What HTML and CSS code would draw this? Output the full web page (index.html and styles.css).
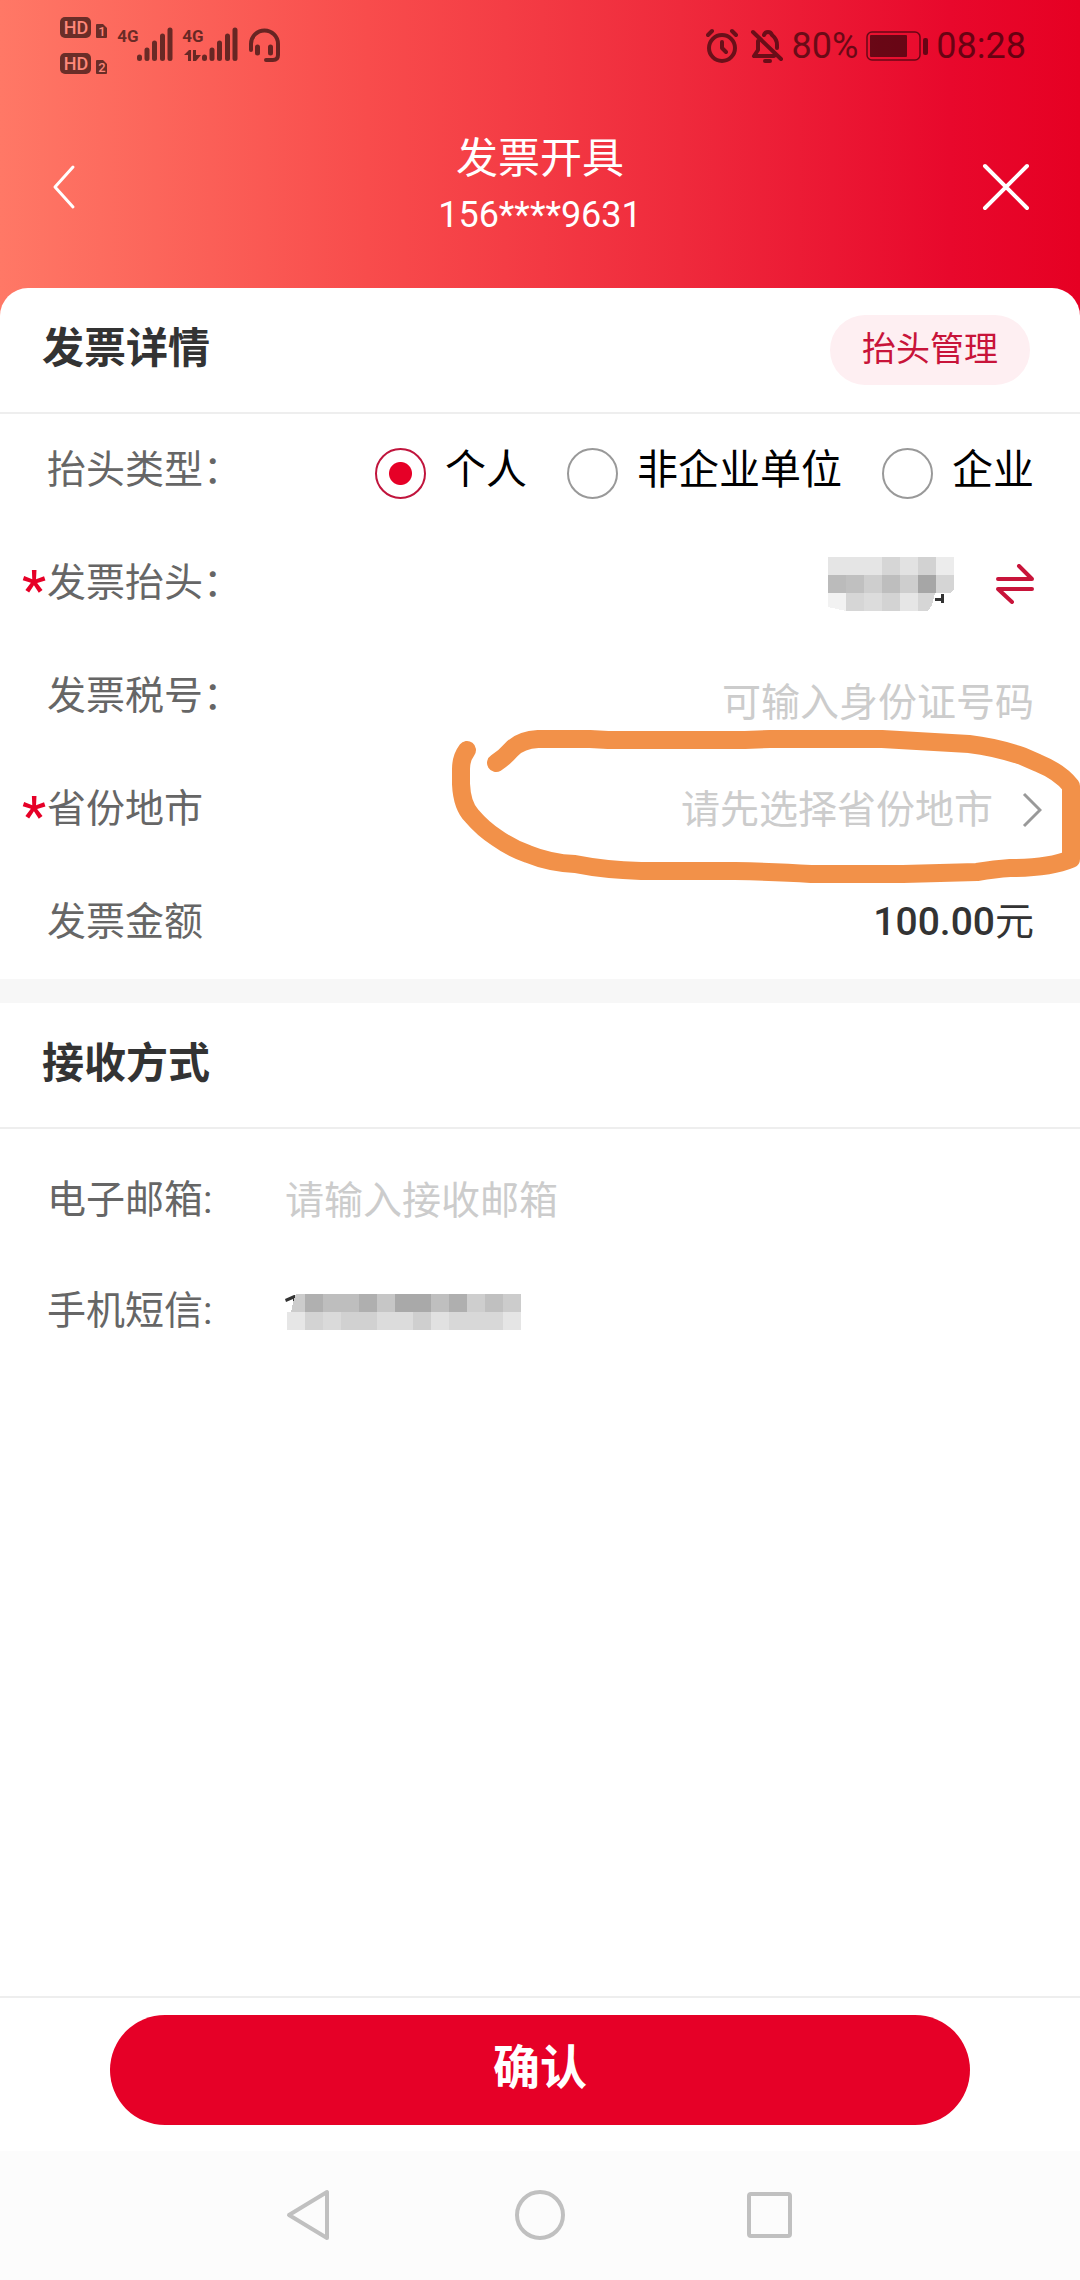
FILE: index.html
```html
<!DOCTYPE html>
<html lang="zh-CN">
<head>
<meta charset="utf-8">
<meta name="viewport" content="width=device-width, initial-scale=1">
<title>发票开具</title>
<link rel="stylesheet" href="styles.css">
</head>
<body>
<div class="page">
  <header class="top">
    <div class="status">
      <div class="status-left">
        <svg class="status-icons" width="220" height="60" viewBox="60 16 220 60" role="img" aria-label="信号">
          <g class="ink">
            <rect x="60" y="17" width="31" height="21" rx="5"/>
            <rect x="60" y="53" width="31" height="21" rx="5"/>
            <path d="M97 24h6l4 4v9q0 1-1 1h-9q-1 0-1-1v-12q0-1 1-1z"/>
            <path d="M97 60h6l4 4v9q0 1-1 1h-9q-1 0-1-1v-12q0-1 1-1z"/>
          </g>
          <g class="badge-text">
            <text x="76" y="34" font-size="18">HD</text>
            <text x="76" y="70" font-size="18">HD</text>
            <text x="102" y="36" font-size="13">1</text>
            <text x="102" y="72" font-size="13">2</text>
          </g>
          <g class="net-text">
            <text x="128" y="42">4G</text>
            <text x="193" y="42">4G</text>
          </g>
          <g class="bars">
            <path d="M139.500 57v1.500M147 50v8.500M154.500 43v15.500M162.500 36v22.500M170 30v28.500"/>
            <path d="M204.500 57v1.500M212 50v8.500M219.500 43v15.500M227.500 36v22.500M235 30v28.500"/>
          </g>
          <path class="ink" d="M184 55l5-5h2v11h-3v-6zM193 50h3v5h5l-5 6h-3z"/>
          <g class="headset">
            <path d="M251 50v-6a13.500 13.500 0 0 1 27 0v11q0 5-5 5h-7"/>
            <path class="thick" d="M257.500 47v6M270.500 47v6"/>
          </g>
        </svg>
      </div>
      <div class="status-right">
        <svg width="36" height="36" viewBox="0 0 36 36" role="img" aria-label="闹钟" class="line">
          <circle cx="18" cy="20" r="13"/>
          <path d="M18 14v6l4 4M4 7l4-4M32 7l-4-4"/>
        </svg>
        <svg width="36" height="36" viewBox="0 0 36 36" role="img" aria-label="静音" class="line">
          <path d="M10 13v9l-4 6h20M16 7q1-3 4-3t4 3q5 4 5 10v3M5 4l28 27"/>
          <path d="M17 33h5"/>
        </svg>
        <span>80%</span>
        <svg class="battery" width="62" height="30" viewBox="0 0 62 30" role="img" aria-label="电量">
          <rect x="1" y="1" width="53" height="28" rx="5" fill="none" stroke="#000" stroke-width="1.500"/>
          <rect x="4" y="4" width="37" height="22" rx="1"/>
          <rect x="57" y="7" width="5" height="17" rx="2"/>
        </svg>
        <time>08:28</time>
      </div>
    </div>
    <nav class="titlebar">
      <button class="icon-btn" type="button" aria-label="返回">
        <svg width="48" height="48" viewBox="0 0 48 48"><path d="M23 4L5 24l18 20" stroke-width="3"/></svg>
      </button>
      <div class="titles">
        <h1>发票开具</h1>
        <p>156****9631</p>
      </div>
      <button class="icon-btn close" type="button" aria-label="关闭">
        <svg width="48" height="48" viewBox="0 0 48 48"><path d="M3 3l42 42M45 3L3 45" stroke-width="4"/></svg>
      </button>
    </nav>
  </header>

  <main class="sheet">
    <form id="invoice" class="form">
      <section>
        <div class="section-head">
          <h2>发票详情</h2>
          <button class="pill" type="button">抬头管理</button>
        </div>
        <div class="row" role="radiogroup" aria-labelledby="type-label">
          <span class="label" id="type-label">抬头类型：</span>
          <div class="options">
            <label class="option"><input type="radio" name="type" checked><span>个人</span></label>
            <label class="option"><input type="radio" name="type"><span>非企业单位</span></label>
            <label class="option"><input type="radio" name="type"><span>企业</span></label>
          </div>
        </div>
        <div class="row">
          <span class="label required">发票抬头：</span>
          <div class="masked-name">
            <svg width="126" height="54" viewBox="0 0 126 54" role="img" aria-label="已隐藏" shape-rendering="crispEdges">
              <path fill="#e5e5e5" d="M0 0h54v18H0z"/><path fill="#d6d6d6" d="M54 0h18v18H54z"/><path fill="#e2e2e2" d="M72 0h18v18H72z"/><path fill="#d2d2d2" d="M90 0h18v18H90z"/><path fill="#ececec" d="M108 0h18v18h-18z"/>
              <path fill="#bbb" d="M0 18h18v18H0z"/><path fill="#c0c0c0" d="M18 18h18v18H18z"/><path fill="#cecece" d="M36 18h18v18H36z"/><path fill="#bebebe" d="M54 18h18v18H54z"/><path fill="#cecece" d="M72 18h18v18H72z"/><path fill="#a6a6a6" d="M90 18h18v18H90z"/><path fill="#d5d5d5" d="M108 18h18v15l-4 3h-14z"/>
              <path fill="#f2f2f2" d="M0 36h18v18L0 50z"/><path fill="#d6d6d6" d="M18 36h18v18H18z"/><path fill="#dcdcdc" d="M36 36h18v18H36z"/><path fill="#d3d3d3" d="M54 36h18v18H54z"/><path fill="#e6e6e6" d="M72 36h18v18H72z"/><path fill="#d6d6d6" d="M90 36h17l-3 12-4 6H90z"/>
              <path fill="#333" d="M107 41h6v-4h3v9h-3v-2h-6z"/>
            </svg>
            <button class="swap" type="button" aria-label="切换抬头">
              <svg width="38" height="40" viewBox="0 0 38 40"><path d="M2 15h34L23 2M36 25H2l14 13"/></svg>
            </button>
          </div>
        </div>
        <div class="row">
          <label class="label" for="tax">发票税号：</label>
          <input class="field field-right" id="tax" type="text" placeholder="可输入身份证号码">
        </div>
        <div class="row region-row">
          <span class="label required" id="region-label">省份地市</span>
          <button class="picker" type="button" aria-haspopup="listbox" aria-describedby="region-label">
            <span>请先选择省份地市</span>
            <svg width="20" height="36" viewBox="0 0 20 36"><path d="M2 2l16 16L2 34"/></svg>
          </button>
          <svg class="marker" width="630" height="160" viewBox="450 728 630 160" aria-hidden="true">
            <path d="M467 750Q461 758 461 769V784Q462 806 472 816Q483 829 497 838Q511 848 528 854Q550 863 575 864Q605 870 641 871H735Q780 872 811 874H903Q935 873 977 872Q995 869 1010 868Q1050 868 1071 859V786Q1060 772 1038 763L1022 756Q995 747 969 744L882 739H770L745 740H608L590 739H538Q520 740 511 750Q504 758 496 763"/>
          </svg>
        </div>
        <div class="row">
          <span class="label">发票金额</span>
          <span class="amount"><b>100.00</b>元</span>
        </div>
      </section>

      <section class="delivery">
        <div class="section-head">
          <h2>接收方式</h2>
        </div>
        <div class="contact">
          <div class="row">
            <label class="label" for="email">电子邮箱:</label>
            <input class="field" id="email" type="email" placeholder="请输入接收邮箱">
          </div>
          <div class="row">
            <span class="label">手机短信:</span>
            <svg class="masked-phone" width="236" height="36" viewBox="0 0 236 36" role="img" aria-label="已隐藏" shape-rendering="crispEdges">
              <path fill="#333" shape-rendering="auto" d="M0 5l9-4h2v7H8V5L1 8z"/>
              <path fill="#ccc" d="M8 9l3-9h9v18H6z"/><path fill="#b0b0b0" d="M20 0h18v18H20z"/><path fill="#bebebe" d="M38 0h36v18H38z"/><path fill="#afafaf" d="M74 0h18v18H74z"/><path fill="#c6c6c6" d="M92 0h18v18H92z"/><path fill="#a9a9a9" d="M110 0h36v18h-36z"/><path fill="#bfbfbf" d="M146 0h18v18h-18z"/><path fill="#afafaf" d="M164 0h18v18h-18z"/><path fill="#cecece" d="M182 0h18v18h-18z"/><path fill="#c0c0c0" d="M200 0h18v18h-18z"/><path fill="#ccc" d="M218 0h18v18h-18z"/>
              <path fill="#e6e6e6" d="M2 18h18v18H2z"/><path fill="#d3d3d3" d="M20 18h18v18H20z"/><path fill="#dadada" d="M38 18h18v18H38z"/><path fill="#d1d1d1" d="M56 18h36v18H56z"/><path fill="#dcdcdc" d="M92 18h36v18H92z"/><path fill="#cfcfcf" d="M128 18h18v18h-18z"/><path fill="#e1e1e1" d="M146 18h18v18h-18z"/><path fill="#d8d8d8" d="M164 18h54v18h-54z"/><path fill="#e5e5e5" d="M218 18h18v18h-18z"/>
            </svg>
          </div>
        </div>
      </section>
    </form>
  </main>

  <footer class="confirm-bar">
    <button class="confirm" type="submit" form="invoice">确认</button>
  </footer>

  <nav class="sysnav">
    <button type="button" aria-label="返回"><svg width="50" height="54" viewBox="0 0 50 54"><path d="M4 27L42 4V50z"/></svg></button>
    <button type="button" aria-label="主页"><svg width="50" height="54" viewBox="0 0 50 54"><circle cx="25" cy="27" r="23"/></svg></button>
    <button type="button" aria-label="最近任务"><svg width="50" height="54" viewBox="0 0 50 54"><rect x="4" y="6" width="41" height="42" rx="2"/></svg></button>
  </nav>
</div>
</body>
</html>
```
FILE: styles.css
```css
* {
  box-sizing: border-box;
}

body {
  margin: 0;
  background: #fff;
  color: #333;
  font-family: Roboto, "Noto Sans CJK SC", sans-serif;
  font-size: 39px;
  line-height: 48px;
}

h1,
h2,
p {
  margin: 0;
}

button {
  border: 0;
  padding: 0;
  background: none;
  color: inherit;
  font: inherit;
  cursor: pointer;
}

svg {
  display: block;
  flex: none;
}

.page {
  display: flex;
  flex-direction: column;
  min-height: 100vh;
}

/* Header */

.top {
  padding-bottom: 48px;
  margin-bottom: -48px;
  background: linear-gradient(90deg, #ff7866 0%, #f84c4c 34%, #ef2a3c 63%, #e8082c 88%, #e60023 100%);
}

.status {
  display: flex;
  justify-content: space-between;
  align-items: center;
  height: 92px;
  padding: 0 54px 0 60px;
}

.status-right {
  display: flex;
  align-items: center;
  gap: 8px;
  opacity: 0.55;
  color: #000;
  font-size: 36px;
}

.status-icons {
  opacity: 0.58;
}

.badge-text text,
.net-text text {
  text-anchor: middle;
  font-weight: 500;
}

.badge-text {
  fill: #ff9a8c;
}

.net-text {
  font-size: 17px;
}

.net-text text {
  font-weight: 700;
}

.bars {
  fill: none;
  stroke: #000;
  stroke-width: 5;
  stroke-linecap: round;
}

.headset,
.line {
  fill: none;
  stroke: #000;
  stroke-width: 4;
  stroke-linecap: round;
  stroke-linejoin: round;
}

.headset .thick {
  stroke-width: 5;
}

.titlebar {
  display: flex;
  justify-content: space-between;
  align-items: center;
  height: 196px;
  padding: 0 50px 6px;
  color: #fff;
}

.icon-btn path {
  fill: none;
  stroke: #fff;
  stroke-linecap: round;
  stroke-linejoin: round;
}

.titles {
  text-align: center;
}

.titles h1 {
  font-size: 42px;
  font-weight: 400;
  line-height: 56px;
}

.titles p {
  font-size: 36px;
  line-height: 56px;
}

/* Form sheet */

.sheet {
  flex: 1;
  border-radius: 28px 28px 0 0;
  background: #fff;
}

.section-head {
  display: flex;
  justify-content: space-between;
  align-items: center;
  height: 126px;
  padding: 0 50px 0 42px;
  border-bottom: 2px solid #eee;
}

.section-head h2 {
  padding-bottom: 2px;
  font-size: 42px;
  font-weight: 700;
}

.pill {
  width: 200px;
  height: 70px;
  padding-bottom: 2px;
  border-radius: 35px;
  background: #feeff2;
  color: #c8143a;
  font-size: 34px;
}

.row {
  position: relative;
  display: flex;
  justify-content: space-between;
  align-items: center;
  height: 113px;
  padding: 0 46px 0 47px;
}

.label {
  padding-bottom: 2px;
  color: #666;
  white-space: nowrap;
}

.required::before {
  content: "*";
  position: absolute;
  left: 22px;
  top: 39px;
  color: #e60027;
  font-size: 54px;
  font-weight: 500;
}

.options {
  display: flex;
  gap: 40px;
}

.option {
  display: flex;
  align-items: center;
  gap: 19px;
  color: #000;
  font-size: 41px;
}

.option span {
  padding-bottom: 2px;
}

.option input {
  appearance: none;
  width: 51px;
  height: 51px;
  margin: 6px 0 0;
  border: 2px solid #999;
  border-radius: 50%;
  background: #fff;
}

.option input:checked {
  border-color: #c0143c;
  background: radial-gradient(circle, #e60027 11px, #fff 12px);
}

.masked-name {
  display: flex;
  align-items: center;
  gap: 42px;
}

.swap path {
  fill: none;
  stroke: #c8143a;
  stroke-width: 4;
  stroke-linecap: round;
  stroke-linejoin: round;
}

.field {
  flex: 1;
  min-width: 0;
  padding: 0;
  border: 0;
  outline: 0;
  background: none;
  color: #333;
  font: inherit;
}

.field::placeholder {
  color: #ccc;
  opacity: 1;
}

.field-right {
  padding-top: 12px;
  text-align: right;
}

.picker {
  display: flex;
  align-items: center;
  gap: 29px;
  color: #ccc;
}

.region-row {
  padding-right: 38px;
}

.picker path {
  fill: none;
  stroke: #999;
  stroke-width: 3;
}

/* Hand-drawn highlight around the region picker */
.marker {
  position: absolute;
  right: 0;
  top: -25px;
  pointer-events: none;
}

.marker path {
  fill: none;
  stroke: #f29149;
  stroke-width: 18;
  stroke-linecap: round;
  stroke-linejoin: round;
}

.amount {
  padding-bottom: 2px;
}

.amount b {
  font-weight: 500;
}

.delivery {
  border-top: 24px solid #f7f7f7;
}

.contact {
  padding-top: 16px;
}

.contact .row {
  justify-content: flex-start;
  height: 111px;
}

.contact .label {
  width: 238px;
}

/* Bottom bars */

.confirm-bar {
  padding: 17px 110px 26px;
  border-top: 2px solid #eee;
}

.confirm {
  display: block;
  width: 100%;
  height: 110px;
  padding-bottom: 4px;
  border-radius: 55px;
  background: #e60027;
  color: #fff;
  font-size: 47px;
  font-weight: 700;
}

.sysnav {
  display: flex;
  justify-content: center;
  align-items: center;
  gap: 180px;
  height: 129px;
  padding-bottom: 2px;
  background: #fcfcfc;
}

.sysnav svg {
  fill: none;
  stroke: #c0c0c0;
  stroke-width: 4;
  stroke-linejoin: round;
}
```
